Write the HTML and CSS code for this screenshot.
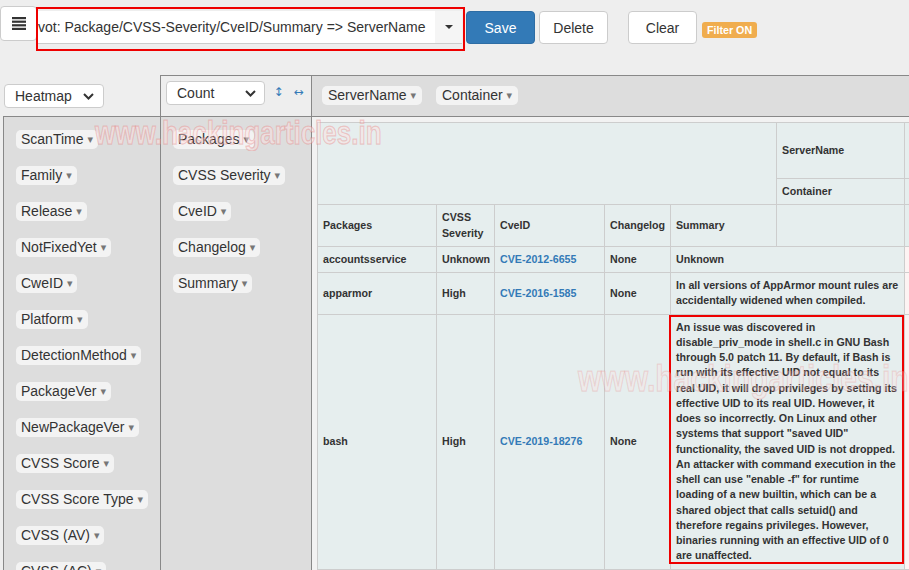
FILE: index.html
```html
<!DOCTYPE html>
<html>
<head>
<meta charset="utf-8">
<link rel="stylesheet" href="styles.css">
</head>
<body>
<div class="topbar">
  <button class="menu-btn" type="button">
    <svg width="14" height="13" viewBox="0 0 14 13"><rect x="0" y="0" width="14" height="2.2" fill="#333"/><rect x="0" y="3.6" width="14" height="2.2" fill="#333"/><rect x="0" y="7.2" width="14" height="2.2" fill="#333"/><rect x="0" y="10.8" width="14" height="2.2" fill="#333"/></svg>
  </button>
  <div class="pivot-select">
    <span class="ps-text">vot: Package/CVSS-Severity/CveID/Summary =&gt; ServerName</span>
    <span class="ps-caret"><span class="caret"></span></span>
  </div>
  <button class="btn btn-primary" type="button">Save</button>
  <button class="btn btn-delete" type="button">Delete</button>
  <button class="btn btn-clear" type="button">Clear</button>
  <span class="badge">Filter ON</span>
  <div class="annot annot-select"></div>
</div>

<div class="pvtUi">
  <div class="cell cell-render">
    <div class="dd dd-heat">Heatmap <svg class="chev" width="11" height="7" viewBox="0 0 11 7"><polyline points="1,1 5.5,5.5 10,1" fill="none" stroke="#333" stroke-width="2"/></svg></div>
  </div>
  <div class="cell cell-agg">
    <div class="dd dd-count">Count <svg class="chev" width="11" height="7" viewBox="0 0 11 7"><polyline points="1,1 5.5,5.5 10,1" fill="none" stroke="#333" stroke-width="2"/></svg></div>
    <span class="order">↕</span>
    <span class="order">↔</span>
  </div>
  <div class="cell cell-cols">
    <span class="pill">ServerName <span class="tri">▾</span></span>
    <span class="pill">Container <span class="tri">▾</span></span>
  </div>

  <div class="cell cell-unused">
    <span class="pill">ScanTime <span class="tri">▾</span></span>
    <span class="pill">Family <span class="tri">▾</span></span>
    <span class="pill">Release <span class="tri">▾</span></span>
    <span class="pill">NotFixedYet <span class="tri">▾</span></span>
    <span class="pill">CweID <span class="tri">▾</span></span>
    <span class="pill">Platform <span class="tri">▾</span></span>
    <span class="pill">DetectionMethod <span class="tri">▾</span></span>
    <span class="pill">PackageVer <span class="tri">▾</span></span>
    <span class="pill">NewPackageVer <span class="tri">▾</span></span>
    <span class="pill">CVSS Score <span class="tri">▾</span></span>
    <span class="pill">CVSS Score Type <span class="tri">▾</span></span>
    <span class="pill">CVSS (AV) <span class="tri">▾</span></span>
    <span class="pill">CVSS (AC) <span class="tri">▾</span></span>
  </div>
  <div class="cell cell-rows">
    <span class="pill">Packages <span class="tri">▾</span></span>
    <span class="pill">CVSS Severity <span class="tri">▾</span></span>
    <span class="pill">CveID <span class="tri">▾</span></span>
    <span class="pill">Changelog <span class="tri">▾</span></span>
    <span class="pill">Summary <span class="tri">▾</span></span>
  </div>
  <div class="cell cell-output">
    <table class="pvtTable">
      <colgroup>
        <col class="c-pkg"><col class="c-sev"><col class="c-cve"><col class="c-chg"><col class="c-sum"><col class="c-lbl"><col class="c-dat">
      </colgroup>
      <tr class="r1">
        <th colspan="5" rowspan="2"></th>
        <th>ServerName</th>
        <th class="dat-h"></th>
      </tr>
      <tr class="r2">
        <th>Container</th>
        <th class="dat-h"></th>
      </tr>
      <tr class="r3">
        <th>Packages</th>
        <th>CVSS Severity</th>
        <th>CveID</th>
        <th class="nowrap">Changelog</th>
        <th>Summary</th>
        <th></th>
        <th class="dat-h"></th>
      </tr>
      <tr>
        <th>accountsservice</th>
        <th>Unknown</th>
        <th><a href="#">CVE-2012-6655</a></th>
        <th>None</th>
        <th colspan="2">Unknown</th>
        <td class="val"></td>
      </tr>
      <tr>
        <th>apparmor</th>
        <th>High</th>
        <th><a href="#">CVE-2016-1585</a></th>
        <th>None</th>
        <th colspan="2">In all versions of AppArmor mount rules are accidentally widened when compiled.</th>
        <td class="val"></td>
      </tr>
      <tr>
        <th>bash</th>
        <th>High</th>
        <th><a href="#">CVE-2019-18276</a></th>
        <th>None</th>
        <th colspan="2" class="sum-annot">An issue was discovered in disable_priv_mode in shell.c in GNU Bash through 5.0 patch 11. By default, if Bash is run with its effective UID not equal to its real UID, it will drop privileges by setting its effective UID to its real UID. However, it does so incorrectly. On Linux and other systems that support "saved UID" functionality, the saved UID is not dropped. An attacker with command execution in the shell can use "enable -f" for runtime loading of a new builtin, which can be a shared object that calls setuid() and therefore regains privileges. However, binaries running with an effective UID of 0 are unaffected.<span class="annot annot-cell"></span></th>
        <td class="val"></td>
      </tr>
    </table>
  </div>
</div>

<span class="wm wm1">www.hackingarticles.in</span>
<span class="wm wm2">www.hackingarticles.in</span>
</body>
</html>
```

FILE: styles.css
```css
* { box-sizing: border-box; }
html, body {
  margin: 0;
  padding: 0;
  width: 909px;
  height: 570px;
  overflow: hidden;
}
body {
  background: #eeeeee;
  font-family: "Liberation Sans", Arial, sans-serif;
  color: #333;
  position: relative;
}

/* top bar */
.topbar {
  display: flex;
  align-items: flex-start;
  height: 75px;
  position: relative;
}
.menu-btn {
  margin-top: 6px;
  width: 37px;
  height: 35px;
  padding: 0;
  background: #fff;
  border: 1px solid #ccc;
  border-radius: 4px;
  display: flex;
  align-items: center;
  justify-content: center;
}
.pivot-select {
  margin-top: 11px;
  margin-left: 1px;
  width: 424px;
  height: 33px;
  display: flex;
  background: #fff;
  border-bottom: 1px solid #ccc;
}
.ps-text {
  flex: 1;
  overflow: hidden;
  white-space: nowrap;
  font-size: 14px;
  line-height: 32px;
  color: #333;
}
.ps-caret {
  width: 27px;
  background: #f5f5f5;
  display: flex;
  align-items: center;
  justify-content: center;
}
.caret {
  width: 0;
  height: 0;
  border-left: 4px solid transparent;
  border-right: 4px solid transparent;
  border-top: 4px solid #333;
}
.btn {
  margin-top: 11px;
  height: 33px;
  width: 69px;
  padding: 0;
  border: 1px solid #ccc;
  border-radius: 4px;
  background: #fff;
  color: #333;
  font-family: "Liberation Sans", Arial, sans-serif;
  font-size: 14px;
}
.btn-primary {
  margin-left: 4px;
  background: #337ab7;
  border-color: #2e6da4;
  color: #fff;
}
.btn-delete { margin-left: 4px; }
.btn-clear { margin-left: 20px; }
.badge {
  margin-top: 22px;
  margin-left: 5px;
  height: 16px;
  padding: 0 5px;
  background: #f0ad4e;
  color: #fff;
  font-weight: bold;
  font-size: 10.7px;
  line-height: 16px;
  border-radius: 3px;
}
.annot {
  position: absolute;
  border: 2px solid #ee0000;
  pointer-events: none;
}
.annot-select {
  left: 36px;
  top: 7px;
  width: 429px;
  height: 44px;
}

/* pivot ui */
.pvtUi {
  display: grid;
  grid-template-columns: 157px 151px 1fr;
  grid-template-rows: 41px auto;
  margin-left: 3px;
  width: 1100px;
}
.cell {
  border-left: 1px solid #888;
  border-top: 1px solid #888;
}
.cell-render {
  border: 0;
  padding: 9px 0 0 1px;
}
.cell-agg {
  padding: 5px 0 0 5px;
  display: flex;
  align-items: flex-start;
}
.cell-cols {
  background: #dddddd;
  padding: 10px 0 0 10px;
  display: flex;
  align-items: flex-start;
  gap: 14px;
}
.cell-cols .pill { height: 19px; padding: 0 6px; }
.cell-unused, .cell-rows {
  background: #dddddd;
  padding: 13px 0 0 12px;
  display: flex;
  flex-direction: column;
  align-items: flex-start;
  gap: 17px;
}
.cell-output {
  background: #f2f2f2;
  padding: 5px;
}

.dd {
  height: 24px;
  background: #fff;
  border: 1px solid #ccc;
  border-radius: 4px;
  font-size: 14px;
  line-height: 22px;
  color: #333;
  display: flex;
  align-items: center;
  justify-content: space-between;
}
.dd-heat {
  width: 100px;
  padding: 0 9px 0 10px;
}
.dd-count {
  width: 99px;
  padding: 0 8px 0 10px;
}
.chev { display: block; }
.order {
  width: 15px;
  margin-left: 5px;
  margin-top: 3px;
  text-align: center;
  color: #337ab7;
  font-family: "DejaVu Sans", sans-serif;
  font-size: 12px;
  line-height: 16px;
}
.order:first-of-type { margin-left: 6px; }

.pill {
  display: inline-flex;
  align-items: center;
  height: 19px;
  background: #f3f3f3;
  border-radius: 5px;
  padding: 0 5px;
  font-size: 14px;
  line-height: 15px;
  color: #333;
  white-space: pre;
}
.tri {
  font-family: "DejaVu Sans", sans-serif;
  font-size: 11px;
  line-height: 11px;
  color: #777;
}

/* output table */
.pvtTable {
  border-collapse: collapse;
  table-layout: fixed;
  width: 687px;
  font-family: "Liberation Sans", Arial, sans-serif;
  font-weight: bold;
  font-size: 8pt;
  line-height: 15.25px;
  color: #333;
}
.c-pkg { width: 119px; }
.c-sev { width: 58px; }
.c-cve { width: 110px; }
.c-chg { width: 66px; }
.c-sum { width: 106px; }
.c-lbl { width: 128px; }
.c-dat { width: 100px; }
.pvtTable th, .pvtTable td {
  border: 1px solid #cdcdcd;
  padding: 5px;
  background: #e6eeee;
  text-align: left;
  vertical-align: middle;
}
.pvtTable td.val { background: #fdf3f3; }
.r1 { height: 56px; }
.r2 { height: 25px; }
.nowrap { white-space: nowrap; }
.pvtTable a {
  color: #337ab7;
  text-decoration: none;
}
.sum-annot { position: relative; }
.annot-cell {
  left: -2px;
  top: 0;
  right: 0;
  bottom: 5px;
}

/* watermark */
.wm {
  position: absolute;
  white-space: nowrap;
  font-family: "Liberation Sans", Arial, sans-serif;
  font-weight: bold;
  color: rgba(255, 225, 225, 0.45);
  -webkit-text-stroke: 1px rgba(225, 100, 100, 0.3);
  transform-origin: 0 0;
  transform: scaleY(1.25);
  pointer-events: none;
}
.wm1 {
  left: 95px;
  top: 116px;
  font-size: 26px;
  line-height: 26px;
}
.wm2 {
  left: 578px;
  top: 360px;
  font-size: 30px;
  line-height: 30px;
  color: rgba(255, 225, 225, 0.3);
  -webkit-text-stroke: 1px rgba(225, 100, 100, 0.2);
}
```
